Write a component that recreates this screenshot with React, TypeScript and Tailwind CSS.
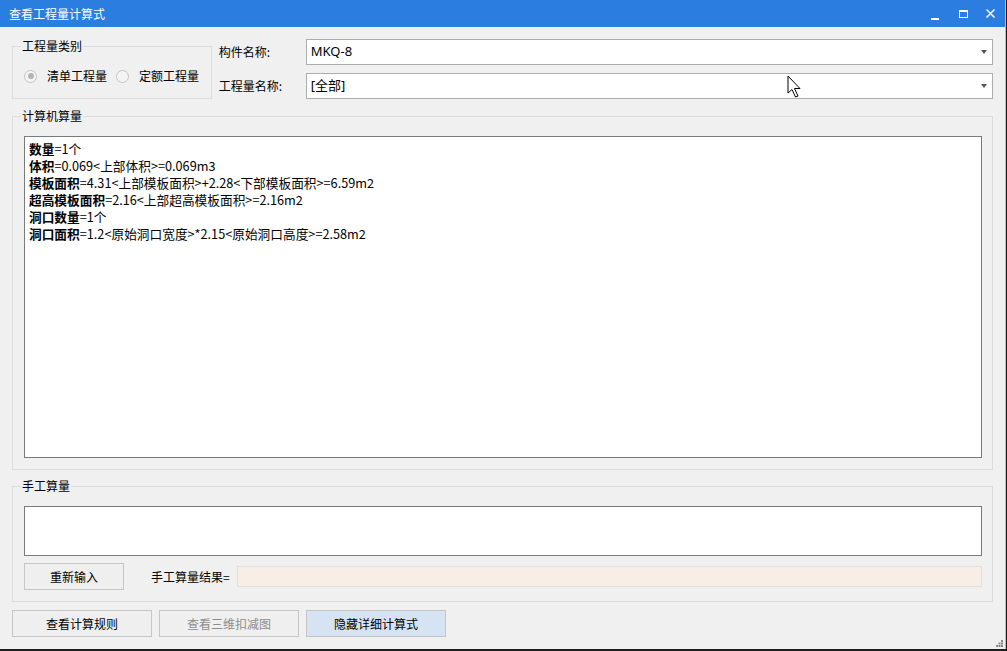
import React from "react";

const CALC_LINES = [
  { label: "数量", rest: "=1个" },
  { label: "体积", rest: "=0.069<上部体积>=0.069m3" },
  { label: "模板面积", rest: "=4.31<上部模板面积>+2.28<下部模板面积>=6.59m2" },
  { label: "超高模板面积", rest: "=2.16<上部超高模板面积>=2.16m2" },
  { label: "洞口数量", rest: "=1个" },
  { label: "洞口面积", rest: "=1.2<原始洞口宽度>*2.15<原始洞口高度>=2.58m2" },
];

function Group({
  title,
  className,
  children,
}: {
  title: string;
  className: string;
  children: React.ReactNode;
}) {
  return (
    <fieldset className={`border border-[#dcdcdc] ${className}`}>
      <legend className="ml-[8px] px-[1px] text-[12px] leading-[16px] text-black">{title}</legend>
      {children}
    </fieldset>
  );
}

function Radio({ checked }: { checked?: boolean }) {
  return (
    <span className="flex h-[13px] w-[13px] items-center justify-center rounded-full border border-[#c4c4c4] bg-[#f4f4f4]">
      {checked && <span className="h-[6px] w-[6px] rounded-full bg-[#b4b4b4]" />}
    </span>
  );
}

function Combo({ value }: { value: string }) {
  return (
    <div className="flex h-[26px] flex-1 items-center justify-between border border-[#adadad] bg-white pl-[4px] pr-[5px]">
      <span className="font-['Noto_Sans','Noto_Sans_CJK_SC',sans-serif] text-[13px] text-black">{value}</span>
      <svg width="6" height="4" viewBox="0 0 6 4">
        <path d="M0 0H6L3 4Z" fill="#555" />
      </svg>
    </div>
  );
}

function Btn({
  label,
  disabled,
  active,
  className = "",
}: {
  label: string;
  disabled?: boolean;
  active?: boolean;
  className?: string;
}) {
  return (
    <div
      className={`flex h-[27px] items-center justify-center border text-[12px] ${
        active ? "border-[#c4c4c4] bg-[#d6e3f3]" : "border-[#c6c6c6] bg-[#efefef]"
      } ${disabled ? "text-[#8d8d8d]" : "text-black"} ${className}`}
    >
      {label}
    </div>
  );
}

export default function App() {
  return (
    <div className="h-[651px] w-[1007px] overflow-hidden bg-[#1c1c1c] font-['Noto_Sans_CJK_SC',sans-serif]">
      <div className="relative flex h-[649px] w-[1006px] flex-col border-r border-[#bdbdbd] bg-[#f0f0f0]">
        {/* title bar */}
        <div className="flex h-[27px] shrink-0 items-center bg-[#2b7de0] pl-[9px] pr-[10px] text-white">
          <span className="text-[12px]">查看工程量计算式</span>
          <div className="ml-auto flex items-center">
            <svg width="8" height="8" viewBox="0 0 8 8" className="mt-[4px]">
              <rect x="0" y="6" width="8" height="2" fill="#fff" />
            </svg>
            <svg width="9" height="8" viewBox="0 0 9 8" className="ml-[20px]">
              <rect x="0.5" y="1" width="8" height="6.5" fill="none" stroke="#fff" strokeWidth="1" />
              <rect x="0" y="0" width="9" height="2" fill="#fff" />
            </svg>
            <svg width="9" height="9" viewBox="0 0 9 9" className="ml-[18px]">
              <path d="M0.5 0.5L8.5 8.5M8.5 0.5L0.5 8.5" stroke="#fff" strokeWidth="1.5" />
            </svg>
          </div>
        </div>

        <div className="flex flex-col px-[12px]">
          {/* top row */}
          <div className="mt-[11px] flex">
            <Group title="工程量类别" className="h-[61px] w-[200px]">
              <div className="mt-[14px] flex h-[16px] items-center text-[12px] text-black">
                <span className="ml-[11px]">
                  <Radio checked />
                </span>
                <span className="ml-[10px]">清单工程量</span>
                <span className="ml-[9px]">
                  <Radio />
                </span>
                <span className="ml-[10px]">定额工程量</span>
              </div>
            </Group>
            <div className="ml-[7px] flex w-[775px] flex-col gap-[8px] pt-[1px]">
              <div className="flex items-center">
                <span className="w-[87px] text-[12px] text-black">构件名称:</span>
                <Combo value="MKQ-8" />
              </div>
              <div className="flex items-center">
                <span className="w-[87px] text-[12px] text-black">工程量名称:</span>
                <Combo value="[全部]" />
              </div>
            </div>
          </div>

          {/* computer calc */}
          <Group title="计算机算量" className="mt-[9px] h-[362px]">
            <div className="ml-[11px] mr-[10px] mt-[12px] h-[322px] border border-[#7a7a7a] bg-white px-[4px] pt-[3px] text-[12.7px] leading-[17px] text-black">
              {CALC_LINES.map((l) => (
                <div key={l.label}>
                  <span className="font-bold">{l.label}</span>
                  <span>{l.rest}</span>
                </div>
              ))}
            </div>
          </Group>

          {/* manual calc */}
          <Group title="手工算量" className="mt-[8px] h-[124px]">
            <div className="ml-[11px] mr-[10px] mt-[12px] h-[50px] border border-[#7a7a7a] bg-white" />
            <div className="ml-[11px] mr-[10px] mt-[7px] flex items-center">
              <Btn label="重新输入" className="w-[100px]" />
              <span className="ml-[27px] text-[12px] text-black">手工算量结果=</span>
              <div className="ml-[7px] h-[21px] flex-1 border border-[#e0e0e0] bg-[#f9eee5]" />
            </div>
          </Group>

          {/* bottom buttons */}
          <div className="mt-[8px] flex gap-[7px]">
            <Btn label="查看计算规则" className="w-[140px]" />
            <Btn label="查看三维扣减图" disabled className="w-[140px]" />
            <Btn label="隐藏详细计算式" active className="w-[140px]" />
          </div>
        </div>

        {/* resize grip */}
        <svg width="7" height="7" viewBox="0 0 7 7" className="absolute bottom-[2px] right-[2px]">
          <rect x="5" y="0" width="2" height="2" fill="#8a8a8a" />
          <rect x="2.5" y="2.5" width="2" height="2" fill="#8a8a8a" />
          <rect x="5" y="2.5" width="2" height="2" fill="#8a8a8a" />
          <rect x="0" y="5" width="2" height="2" fill="#8a8a8a" />
          <rect x="2.5" y="5" width="2" height="2" fill="#8a8a8a" />
          <rect x="5" y="5" width="2" height="2" fill="#8a8a8a" />
        </svg>

        {/* mouse cursor */}
        <svg width="16" height="24" viewBox="0 0 16 24" className="absolute left-[787px] top-[75px]">
          <path
            d="M1 1L1 18L5 14.5L8.5 22L11 21L7.5 13.5L13 13.5Z"
            fill="#fff"
            stroke="#000"
            strokeWidth="1"
            strokeLinejoin="round"
          />
        </svg>
      </div>
    </div>
  );
}
